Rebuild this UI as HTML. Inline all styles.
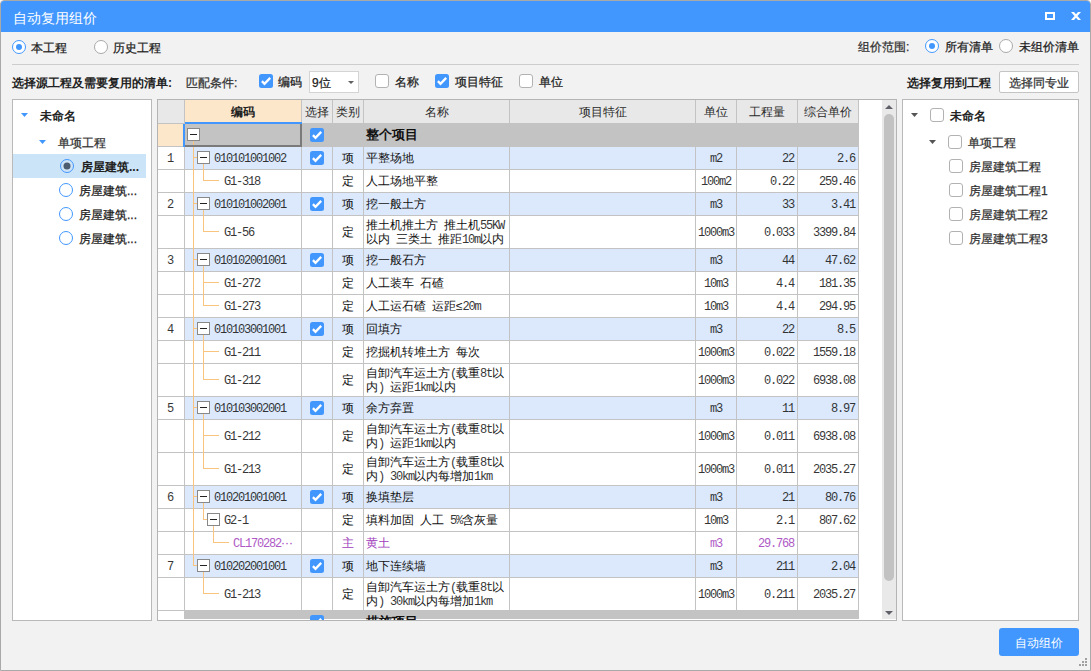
<!DOCTYPE html>
<html><head><meta charset="utf-8"><style>
html,body{margin:0;padding:0;width:1091px;height:671px;overflow:hidden;background:#fff}
body>div,body>svg{position:absolute}
#root{position:absolute;left:0;top:0;width:1091px;height:671px;overflow:hidden}
#root>div,#root>svg{position:absolute}
.t{font-family:'Liberation Sans',sans-serif;white-space:nowrap;-webkit-text-stroke:0.25px currentColor}
.w{-webkit-text-stroke:0}
.tt{font-family:'Liberation Sans',sans-serif;font-size:12px;white-space:nowrap}
.tt .m{font-family:'Liberation Mono',monospace;font-size:12px;letter-spacing:-1.2px;opacity:.85}
</style></head><body><div id="root">
<div style="left:0px;top:0px;width:1091px;height:671px;background:#fff"></div>
<div style="left:0px;top:0px;width:1091px;height:671px;background:#f2f2f2;border:1px solid #a9a9a9;box-sizing:border-box;border-radius:4px 4px 0 0"></div>
<div style="left:1px;top:1px;width:1089px;height:31px;background:#4297fe;border-radius:3px 3px 0 0"></div>
<div class="t" style="left:13px;top:7.5px;font-size:14px;line-height:20px;font-weight:normal;color:#fff;-webkit-text-stroke:0;">自动复用组价</div>
<div style="left:1045px;top:12px;width:10px;height:8px;border:2px solid #fff;box-sizing:border-box"></div>
<svg style="left:1071px;top:12px" width="10" height="8" viewBox="0 0 10 8"><path d="M0 0 H3 L10 8 H7 Z M7 0 H10 L3 8 H0 Z" fill="#fff"/></svg>
<svg style="left:12px;top:40px" width="14" height="14" viewBox="0 0 14 14"><circle cx="7" cy="7" r="6.5" fill="#fff" stroke="#4297fe" stroke-width="1"/><circle cx="7" cy="7" r="3" fill="#4297fe"/></svg>
<div class="t" style="left:31px;top:38.0px;font-size:12px;line-height:20px;font-weight:normal;color:#222;">本工程</div>
<svg style="left:94px;top:40px" width="14" height="14" viewBox="0 0 14 14"><circle cx="7" cy="7" r="6.5" fill="#fff" stroke="#a8a8a8" stroke-width="1"/></svg>
<div class="t" style="left:113px;top:38.0px;font-size:12px;line-height:20px;font-weight:normal;color:#222;">历史工程</div>
<div class="t" style="left:858px;top:37.0px;font-size:12px;line-height:20px;font-weight:normal;color:#333;">组价范围:</div>
<svg style="left:925px;top:39px" width="14" height="14" viewBox="0 0 14 14"><circle cx="7" cy="7" r="6.5" fill="#fff" stroke="#4297fe" stroke-width="1"/><circle cx="7" cy="7" r="3" fill="#4297fe"/></svg>
<div class="t" style="left:945px;top:37.0px;font-size:12px;line-height:20px;font-weight:normal;color:#222;">所有清单</div>
<svg style="left:999px;top:39px" width="14" height="14" viewBox="0 0 14 14"><circle cx="7" cy="7" r="6.5" fill="#fff" stroke="#a8a8a8" stroke-width="1"/></svg>
<div class="t" style="left:1019px;top:37.0px;font-size:12px;line-height:20px;font-weight:normal;color:#222;">未组价清单</div>
<div style="left:12px;top:64px;width:1067px;height:1px;background:#cdcdcd"></div>
<div class="t" style="left:12px;top:73.0px;font-size:12px;line-height:20px;font-weight:bold;color:#222;-webkit-text-stroke:0;">选择源工程及需要复用的清单:</div>
<div class="t" style="left:186px;top:72.5px;font-size:12px;line-height:20px;font-weight:normal;color:#333;">匹配条件:</div>
<svg style="left:259px;top:74px" width="14" height="14" viewBox="0 0 14 14"><rect x="0" y="0" width="14" height="14" rx="2.5" fill="#4297fe"/><path d="M2.9 7.1 L5.5 9.8 L11.2 3.9" stroke="#fff" stroke-width="2.3" fill="none" stroke-linecap="butt"/></svg>
<div class="t" style="left:278px;top:71.5px;font-size:12px;line-height:20px;font-weight:normal;color:#222;">编码</div>
<div style="left:309px;top:71px;width:50px;height:22px;background:#fff;border:1px solid #d4d4d4;box-sizing:border-box"></div>
<div class="t" style="left:312px;top:73.3px;font-size:12px;line-height:20px;font-weight:normal;color:#222;">9位</div>
<svg style="left:348px;top:81px" width="6" height="3" viewBox="0 0 6 3"><path d="M0 0 L6 0 L3.0 3 Z" fill="#606060"/></svg>
<svg style="left:375px;top:74px" width="14" height="14" viewBox="0 0 14 14"><rect x="0.5" y="0.5" width="13" height="13" rx="2.5" fill="#fff" stroke="#b2b2b2" stroke-width="1"/></svg>
<div class="t" style="left:395px;top:71.5px;font-size:12px;line-height:20px;font-weight:normal;color:#222;">名称</div>
<svg style="left:435px;top:74px" width="14" height="14" viewBox="0 0 14 14"><rect x="0" y="0" width="14" height="14" rx="2.5" fill="#4297fe"/><path d="M2.9 7.1 L5.5 9.8 L11.2 3.9" stroke="#fff" stroke-width="2.3" fill="none" stroke-linecap="butt"/></svg>
<div class="t" style="left:455px;top:71.5px;font-size:12px;line-height:20px;font-weight:normal;color:#222;">项目特征</div>
<svg style="left:519px;top:74px" width="14" height="14" viewBox="0 0 14 14"><rect x="0.5" y="0.5" width="13" height="13" rx="2.5" fill="#fff" stroke="#b2b2b2" stroke-width="1"/></svg>
<div class="t" style="left:539px;top:71.5px;font-size:12px;line-height:20px;font-weight:normal;color:#222;">单位</div>
<div class="t" style="left:907px;top:73.0px;font-size:12px;line-height:20px;font-weight:bold;color:#222;-webkit-text-stroke:0;">选择复用到工程</div>
<div style="left:999px;top:71px;width:80px;height:22px;background:#fff;border:1px solid #c4c4c4;box-sizing:border-box;border-radius:2px"></div>
<div class="t" style="left:1009px;top:73.0px;font-size:12px;line-height:20px;font-weight:normal;color:#333;">选择同专业</div>
<div style="left:12px;top:99px;width:140px;height:522px;background:#fff;border:1px solid #b9b9b9;box-sizing:border-box"></div>
<svg style="left:21px;top:113px" width="7" height="4" viewBox="0 0 7 4"><path d="M0 0 L7 0 L3.5 4 Z" fill="#4297fe"/></svg>
<div class="t" style="left:40px;top:106.0px;font-size:12px;line-height:20px;font-weight:bold;color:#222;-webkit-text-stroke:0;">未命名</div>
<svg style="left:39px;top:140px" width="7" height="4" viewBox="0 0 7 4"><path d="M0 0 L7 0 L3.5 4 Z" fill="#4297fe"/></svg>
<div class="t" style="left:58px;top:132.5px;font-size:12px;line-height:20px;font-weight:normal;color:#333;">单项工程</div>
<div style="left:13px;top:154px;width:133px;height:24px;background:#cce4f7"></div>
<svg style="left:60px;top:159px" width="14" height="14" viewBox="0 0 14 14"><circle cx="7" cy="7" r="6.5" fill="#cfe3f7" stroke="#4297fe" stroke-width="1"/><circle cx="7" cy="7" r="3.5" fill="#4b5b70"/></svg>
<div class="t" style="left:81px;top:157.0px;font-size:12px;line-height:20px;font-weight:bold;color:#222;-webkit-text-stroke:0;">房屋建筑...</div>
<svg style="left:59px;top:183px" width="14" height="14" viewBox="0 0 14 14"><circle cx="7" cy="7" r="6.5" fill="#fff" stroke="#4297fe" stroke-width="1"/></svg>
<div class="t" style="left:79px;top:180.5px;font-size:12px;line-height:20px;font-weight:normal;color:#222;">房屋建筑...</div>
<svg style="left:59px;top:207px" width="14" height="14" viewBox="0 0 14 14"><circle cx="7" cy="7" r="6.5" fill="#fff" stroke="#4297fe" stroke-width="1"/></svg>
<div class="t" style="left:79px;top:204.5px;font-size:12px;line-height:20px;font-weight:normal;color:#222;">房屋建筑...</div>
<svg style="left:59px;top:231px" width="14" height="14" viewBox="0 0 14 14"><circle cx="7" cy="7" r="6.5" fill="#fff" stroke="#4297fe" stroke-width="1"/></svg>
<div class="t" style="left:79px;top:228.5px;font-size:12px;line-height:20px;font-weight:normal;color:#222;">房屋建筑...</div>
<div style="left:902px;top:99px;width:177px;height:522px;background:#fff;border:1px solid #b9b9b9;box-sizing:border-box"></div>
<svg style="left:911px;top:113px" width="7" height="4" viewBox="0 0 7 4"><path d="M0 0 L7 0 L3.5 4 Z" fill="#555"/></svg>
<svg style="left:930px;top:108px" width="14" height="14" viewBox="0 0 14 14"><rect x="0.5" y="0.5" width="13" height="13" rx="2.5" fill="#fff" stroke="#b2b2b2" stroke-width="1"/></svg>
<div class="t" style="left:950px;top:106.0px;font-size:12px;line-height:20px;font-weight:bold;color:#222;-webkit-text-stroke:0;">未命名</div>
<svg style="left:929px;top:140px" width="7" height="4" viewBox="0 0 7 4"><path d="M0 0 L7 0 L3.5 4 Z" fill="#555"/></svg>
<svg style="left:948px;top:135px" width="14" height="14" viewBox="0 0 14 14"><rect x="0.5" y="0.5" width="13" height="13" rx="2.5" fill="#fff" stroke="#b2b2b2" stroke-width="1"/></svg>
<div class="t" style="left:968px;top:132.5px;font-size:12px;line-height:20px;font-weight:normal;color:#333;">单项工程</div>
<svg style="left:949px;top:159px" width="14" height="14" viewBox="0 0 14 14"><rect x="0.5" y="0.5" width="13" height="13" rx="2.5" fill="#fff" stroke="#b2b2b2" stroke-width="1"/></svg>
<div class="t" style="left:969px;top:156.5px;font-size:12px;line-height:20px;font-weight:normal;color:#333;">房屋建筑工程</div>
<svg style="left:949px;top:183px" width="14" height="14" viewBox="0 0 14 14"><rect x="0.5" y="0.5" width="13" height="13" rx="2.5" fill="#fff" stroke="#b2b2b2" stroke-width="1"/></svg>
<div class="t" style="left:969px;top:180.5px;font-size:12px;line-height:20px;font-weight:normal;color:#333;">房屋建筑工程1</div>
<svg style="left:949px;top:207px" width="14" height="14" viewBox="0 0 14 14"><rect x="0.5" y="0.5" width="13" height="13" rx="2.5" fill="#fff" stroke="#b2b2b2" stroke-width="1"/></svg>
<div class="t" style="left:969px;top:204.5px;font-size:12px;line-height:20px;font-weight:normal;color:#333;">房屋建筑工程2</div>
<svg style="left:949px;top:231px" width="14" height="14" viewBox="0 0 14 14"><rect x="0.5" y="0.5" width="13" height="13" rx="2.5" fill="#fff" stroke="#b2b2b2" stroke-width="1"/></svg>
<div class="t" style="left:969px;top:228.5px;font-size:12px;line-height:20px;font-weight:normal;color:#333;">房屋建筑工程3</div>
<div style="left:999px;top:628px;width:80px;height:28px;background:#4297fe;border-radius:3px"></div>
<div class="t" style="left:1015px;top:633.0px;font-size:12px;line-height:20px;font-weight:normal;color:#fff;-webkit-text-stroke:0;">自动组价</div>
<div style="left:1085px;top:658px;width:2px;height:2px;background:#a0a0a0"></div>
<div style="left:1082px;top:661px;width:2px;height:2px;background:#a0a0a0"></div>
<div style="left:1085px;top:661px;width:2px;height:2px;background:#a0a0a0"></div>
<div style="left:1079px;top:664px;width:2px;height:2px;background:#a0a0a0"></div>
<div style="left:1082px;top:664px;width:2px;height:2px;background:#a0a0a0"></div>
<div style="left:1085px;top:664px;width:2px;height:2px;background:#a0a0a0"></div>
<div style="left:157px;top:99px;width:740px;height:522px;background:#fff"></div>
<div style="left:158px;top:100px;width:700px;height:23px;background:#e8e8e8"></div>
<div style="left:185px;top:100px;width:116px;height:22px;background:#fde7ca"></div>
<div style="left:185px;top:124px;width:673px;height:22px;background:#c3c3c3"></div>
<div style="left:185px;top:147px;width:673px;height:22px;background:#dce9fc"></div>
<div style="left:185px;top:193px;width:673px;height:22px;background:#dce9fc"></div>
<div style="left:185px;top:249px;width:673px;height:22px;background:#dce9fc"></div>
<div style="left:185px;top:318px;width:673px;height:22px;background:#dce9fc"></div>
<div style="left:185px;top:397px;width:673px;height:22px;background:#dce9fc"></div>
<div style="left:185px;top:486px;width:673px;height:22px;background:#dce9fc"></div>
<div style="left:185px;top:555px;width:673px;height:22px;background:#dce9fc"></div>
<div style="left:184px;top:611px;width:674px;height:8px;background:#c3c3c3"></div>
<div style="left:158px;top:124px;width:26px;height:22px;background:#fde7ca"></div>
<div style="left:158px;top:123px;width:700px;height:1px;background:#c3c3c3"></div>
<div style="left:158px;top:146px;width:700px;height:1px;background:#c3c3c3"></div>
<div style="left:158px;top:169px;width:700px;height:1px;background:#c3c3c3"></div>
<div style="left:158px;top:192px;width:700px;height:1px;background:#c3c3c3"></div>
<div style="left:158px;top:215px;width:700px;height:1px;background:#c3c3c3"></div>
<div style="left:158px;top:248px;width:700px;height:1px;background:#c3c3c3"></div>
<div style="left:158px;top:271px;width:700px;height:1px;background:#c3c3c3"></div>
<div style="left:158px;top:294px;width:700px;height:1px;background:#c3c3c3"></div>
<div style="left:158px;top:317px;width:700px;height:1px;background:#c3c3c3"></div>
<div style="left:158px;top:340px;width:700px;height:1px;background:#c3c3c3"></div>
<div style="left:158px;top:363px;width:700px;height:1px;background:#c3c3c3"></div>
<div style="left:158px;top:396px;width:700px;height:1px;background:#c3c3c3"></div>
<div style="left:158px;top:419px;width:700px;height:1px;background:#c3c3c3"></div>
<div style="left:158px;top:452px;width:700px;height:1px;background:#c3c3c3"></div>
<div style="left:158px;top:485px;width:700px;height:1px;background:#c3c3c3"></div>
<div style="left:158px;top:508px;width:700px;height:1px;background:#c3c3c3"></div>
<div style="left:158px;top:531px;width:700px;height:1px;background:#c3c3c3"></div>
<div style="left:158px;top:554px;width:700px;height:1px;background:#c3c3c3"></div>
<div style="left:158px;top:577px;width:700px;height:1px;background:#c3c3c3"></div>
<div style="left:158px;top:610px;width:700px;height:1px;background:#c3c3c3"></div>
<div style="left:184px;top:100px;width:1px;height:511px;background:#c3c3c3"></div>
<div style="left:301px;top:100px;width:1px;height:519px;background:#c3c3c3"></div>
<div style="left:332px;top:100px;width:1px;height:519px;background:#c3c3c3"></div>
<div style="left:363px;top:100px;width:1px;height:519px;background:#c3c3c3"></div>
<div style="left:509px;top:100px;width:1px;height:519px;background:#c3c3c3"></div>
<div style="left:695px;top:100px;width:1px;height:519px;background:#c3c3c3"></div>
<div style="left:736px;top:100px;width:1px;height:519px;background:#c3c3c3"></div>
<div style="left:797px;top:100px;width:1px;height:519px;background:#c3c3c3"></div>
<div style="left:858px;top:100px;width:1px;height:519px;background:#c3c3c3"></div>
<div style="left:193px;top:141px;width:1px;height:425px;background:#f9c47f"></div>
<div style="left:193px;top:157px;width:4px;height:1px;background:#f9c47f"></div>
<div style="left:193px;top:203px;width:4px;height:1px;background:#f9c47f"></div>
<div style="left:193px;top:259px;width:4px;height:1px;background:#f9c47f"></div>
<div style="left:193px;top:328px;width:4px;height:1px;background:#f9c47f"></div>
<div style="left:193px;top:407px;width:4px;height:1px;background:#f9c47f"></div>
<div style="left:193px;top:496px;width:4px;height:1px;background:#f9c47f"></div>
<div style="left:193px;top:565px;width:4px;height:1px;background:#f9c47f"></div>
<div style="left:203px;top:164px;width:1px;height:17px;background:#f9c47f"></div>
<div style="left:203px;top:180px;width:16px;height:1px;background:#f9c47f"></div>
<div style="left:203px;top:210px;width:1px;height:22px;background:#f9c47f"></div>
<div style="left:203px;top:231px;width:16px;height:1px;background:#f9c47f"></div>
<div style="left:203px;top:266px;width:1px;height:40px;background:#f9c47f"></div>
<div style="left:203px;top:282px;width:16px;height:1px;background:#f9c47f"></div>
<div style="left:203px;top:305px;width:16px;height:1px;background:#f9c47f"></div>
<div style="left:203px;top:335px;width:1px;height:45px;background:#f9c47f"></div>
<div style="left:203px;top:351px;width:16px;height:1px;background:#f9c47f"></div>
<div style="left:203px;top:379px;width:16px;height:1px;background:#f9c47f"></div>
<div style="left:203px;top:414px;width:1px;height:55px;background:#f9c47f"></div>
<div style="left:203px;top:435px;width:16px;height:1px;background:#f9c47f"></div>
<div style="left:203px;top:468px;width:16px;height:1px;background:#f9c47f"></div>
<div style="left:203px;top:503px;width:1px;height:17px;background:#f9c47f"></div>
<div style="left:203px;top:519px;width:4px;height:1px;background:#f9c47f"></div>
<div style="left:203px;top:572px;width:1px;height:22px;background:#f9c47f"></div>
<div style="left:203px;top:593px;width:16px;height:1px;background:#f9c47f"></div>
<div style="left:213px;top:526px;width:1px;height:17px;background:#f9c47f"></div>
<div style="left:213px;top:542px;width:16px;height:1px;background:#f9c47f"></div>
<svg style="left:187px;top:128px" width="13" height="13" viewBox="0 0 13 13"><rect x="0.5" y="0.5" width="12" height="12" fill="#fff" stroke="#888"/><path d="M3 6.5 H10" stroke="#222" stroke-width="1"/></svg>
<svg style="left:310px;top:128px" width="14" height="14" viewBox="0 0 14 14"><rect x="0" y="0" width="14" height="14" rx="2.5" fill="#4297fe"/><path d="M2.9 7.1 L5.5 9.8 L11.2 3.9" stroke="#fff" stroke-width="2.3" fill="none" stroke-linecap="butt"/></svg>
<div class="t" style="left:366px;top:125.0px;font-size:13px;line-height:20px;font-weight:bold;color:#111;-webkit-text-stroke:0;">整个项目</div>
<div class="tt" style="left:157px;top:149.5px;line-height:16px;color:#111;font-weight:normal;text-align:center;width:26px;"><span class="m">1</span></div>
<svg style="left:197px;top:151px" width="13" height="13" viewBox="0 0 13 13"><rect x="0.5" y="0.5" width="12" height="12" fill="#fff" stroke="#888"/><path d="M3 6.5 H10" stroke="#222" stroke-width="1"/></svg>
<div class="tt" style="left:214px;top:149.5px;line-height:16px;color:#111;font-weight:normal;"><span class="m">010101001002</span></div>
<svg style="left:310px;top:151px" width="14" height="14" viewBox="0 0 14 14"><rect x="0" y="0" width="14" height="14" rx="2.5" fill="#4297fe"/><path d="M2.9 7.1 L5.5 9.8 L11.2 3.9" stroke="#fff" stroke-width="2.3" fill="none" stroke-linecap="butt"/></svg>
<div class="tt" style="left:333px;top:149.5px;line-height:16px;color:#111;font-weight:normal;text-align:center;width:30px;"><span class="c">项</span></div>
<div class="tt" style="left:366px;top:149.5px;line-height:16px;color:#111;font-weight:normal;"><span class="c">平整场地</span></div>
<div class="tt" style="left:696px;top:149.5px;line-height:16px;color:#111;font-weight:normal;text-align:center;width:40px;"><span class="m">m2</span></div>
<div class="tt" style="left:736px;top:149.5px;line-height:16px;color:#111;font-weight:normal;text-align:right;width:58px;"><span class="m">22</span></div>
<div class="tt" style="left:797px;top:149.5px;line-height:16px;color:#111;font-weight:normal;text-align:right;width:58px;"><span class="m">2.6</span></div>
<div class="tt" style="left:224px;top:172.5px;line-height:16px;color:#111;font-weight:normal;"><span class="m">G1-318</span></div>
<div class="tt" style="left:333px;top:172.5px;line-height:16px;color:#111;font-weight:normal;text-align:center;width:30px;"><span class="c">定</span></div>
<div class="tt" style="left:366px;top:172.5px;line-height:16px;color:#111;font-weight:normal;"><span class="c">人工场地平整</span></div>
<div class="tt" style="left:696px;top:172.5px;line-height:16px;color:#111;font-weight:normal;text-align:center;width:40px;"><span class="m">100m2</span></div>
<div class="tt" style="left:736px;top:172.5px;line-height:16px;color:#111;font-weight:normal;text-align:right;width:58px;"><span class="m">0.22</span></div>
<div class="tt" style="left:797px;top:172.5px;line-height:16px;color:#111;font-weight:normal;text-align:right;width:58px;"><span class="m">259.46</span></div>
<div class="tt" style="left:157px;top:195.5px;line-height:16px;color:#111;font-weight:normal;text-align:center;width:26px;"><span class="m">2</span></div>
<svg style="left:197px;top:197px" width="13" height="13" viewBox="0 0 13 13"><rect x="0.5" y="0.5" width="12" height="12" fill="#fff" stroke="#888"/><path d="M3 6.5 H10" stroke="#222" stroke-width="1"/></svg>
<div class="tt" style="left:214px;top:195.5px;line-height:16px;color:#111;font-weight:normal;"><span class="m">010101002001</span></div>
<svg style="left:310px;top:197px" width="14" height="14" viewBox="0 0 14 14"><rect x="0" y="0" width="14" height="14" rx="2.5" fill="#4297fe"/><path d="M2.9 7.1 L5.5 9.8 L11.2 3.9" stroke="#fff" stroke-width="2.3" fill="none" stroke-linecap="butt"/></svg>
<div class="tt" style="left:333px;top:195.5px;line-height:16px;color:#111;font-weight:normal;text-align:center;width:30px;"><span class="c">项</span></div>
<div class="tt" style="left:366px;top:195.5px;line-height:16px;color:#111;font-weight:normal;"><span class="c">挖一般土方</span></div>
<div class="tt" style="left:696px;top:195.5px;line-height:16px;color:#111;font-weight:normal;text-align:center;width:40px;"><span class="m">m3</span></div>
<div class="tt" style="left:736px;top:195.5px;line-height:16px;color:#111;font-weight:normal;text-align:right;width:58px;"><span class="m">33</span></div>
<div class="tt" style="left:797px;top:195.5px;line-height:16px;color:#111;font-weight:normal;text-align:right;width:58px;"><span class="m">3.41</span></div>
<div class="tt" style="left:224px;top:223.5px;line-height:16px;color:#111;font-weight:normal;"><span class="m">G1-56</span></div>
<div class="tt" style="left:333px;top:223.5px;line-height:16px;color:#111;font-weight:normal;text-align:center;width:30px;"><span class="c">定</span></div>
<div class="tt" style="left:366px;top:216.5px;line-height:16px;color:#111;font-weight:normal;"><span class="c">推土机推土方</span><span class="m">&nbsp;</span><span class="c">推土机</span><span class="m">55KW</span></div>
<div class="tt" style="left:366px;top:230.5px;line-height:16px;color:#111;font-weight:normal;"><span class="c">以内</span><span class="m">&nbsp;</span><span class="c">三类土</span><span class="m">&nbsp;</span><span class="c">推距</span><span class="m">10m</span><span class="c">以内</span></div>
<div class="tt" style="left:696px;top:223.5px;line-height:16px;color:#111;font-weight:normal;text-align:center;width:40px;"><span class="m">1000m3</span></div>
<div class="tt" style="left:736px;top:223.5px;line-height:16px;color:#111;font-weight:normal;text-align:right;width:58px;"><span class="m">0.033</span></div>
<div class="tt" style="left:797px;top:223.5px;line-height:16px;color:#111;font-weight:normal;text-align:right;width:58px;"><span class="m">3399.84</span></div>
<div class="tt" style="left:157px;top:251.5px;line-height:16px;color:#111;font-weight:normal;text-align:center;width:26px;"><span class="m">3</span></div>
<svg style="left:197px;top:253px" width="13" height="13" viewBox="0 0 13 13"><rect x="0.5" y="0.5" width="12" height="12" fill="#fff" stroke="#888"/><path d="M3 6.5 H10" stroke="#222" stroke-width="1"/></svg>
<div class="tt" style="left:214px;top:251.5px;line-height:16px;color:#111;font-weight:normal;"><span class="m">010102001001</span></div>
<svg style="left:310px;top:253px" width="14" height="14" viewBox="0 0 14 14"><rect x="0" y="0" width="14" height="14" rx="2.5" fill="#4297fe"/><path d="M2.9 7.1 L5.5 9.8 L11.2 3.9" stroke="#fff" stroke-width="2.3" fill="none" stroke-linecap="butt"/></svg>
<div class="tt" style="left:333px;top:251.5px;line-height:16px;color:#111;font-weight:normal;text-align:center;width:30px;"><span class="c">项</span></div>
<div class="tt" style="left:366px;top:251.5px;line-height:16px;color:#111;font-weight:normal;"><span class="c">挖一般石方</span></div>
<div class="tt" style="left:696px;top:251.5px;line-height:16px;color:#111;font-weight:normal;text-align:center;width:40px;"><span class="m">m3</span></div>
<div class="tt" style="left:736px;top:251.5px;line-height:16px;color:#111;font-weight:normal;text-align:right;width:58px;"><span class="m">44</span></div>
<div class="tt" style="left:797px;top:251.5px;line-height:16px;color:#111;font-weight:normal;text-align:right;width:58px;"><span class="m">47.62</span></div>
<div class="tt" style="left:224px;top:274.5px;line-height:16px;color:#111;font-weight:normal;"><span class="m">G1-272</span></div>
<div class="tt" style="left:333px;top:274.5px;line-height:16px;color:#111;font-weight:normal;text-align:center;width:30px;"><span class="c">定</span></div>
<div class="tt" style="left:366px;top:274.5px;line-height:16px;color:#111;font-weight:normal;"><span class="c">人工装车</span><span class="m">&nbsp;</span><span class="c">石碴</span></div>
<div class="tt" style="left:696px;top:274.5px;line-height:16px;color:#111;font-weight:normal;text-align:center;width:40px;"><span class="m">10m3</span></div>
<div class="tt" style="left:736px;top:274.5px;line-height:16px;color:#111;font-weight:normal;text-align:right;width:58px;"><span class="m">4.4</span></div>
<div class="tt" style="left:797px;top:274.5px;line-height:16px;color:#111;font-weight:normal;text-align:right;width:58px;"><span class="m">181.35</span></div>
<div class="tt" style="left:224px;top:297.5px;line-height:16px;color:#111;font-weight:normal;"><span class="m">G1-273</span></div>
<div class="tt" style="left:333px;top:297.5px;line-height:16px;color:#111;font-weight:normal;text-align:center;width:30px;"><span class="c">定</span></div>
<div class="tt" style="left:366px;top:297.5px;line-height:16px;color:#111;font-weight:normal;"><span class="c">人工运石碴</span><span class="m">&nbsp;</span><span class="c">运距≤</span><span class="m">20m</span></div>
<div class="tt" style="left:696px;top:297.5px;line-height:16px;color:#111;font-weight:normal;text-align:center;width:40px;"><span class="m">10m3</span></div>
<div class="tt" style="left:736px;top:297.5px;line-height:16px;color:#111;font-weight:normal;text-align:right;width:58px;"><span class="m">4.4</span></div>
<div class="tt" style="left:797px;top:297.5px;line-height:16px;color:#111;font-weight:normal;text-align:right;width:58px;"><span class="m">294.95</span></div>
<div class="tt" style="left:157px;top:320.5px;line-height:16px;color:#111;font-weight:normal;text-align:center;width:26px;"><span class="m">4</span></div>
<svg style="left:197px;top:322px" width="13" height="13" viewBox="0 0 13 13"><rect x="0.5" y="0.5" width="12" height="12" fill="#fff" stroke="#888"/><path d="M3 6.5 H10" stroke="#222" stroke-width="1"/></svg>
<div class="tt" style="left:214px;top:320.5px;line-height:16px;color:#111;font-weight:normal;"><span class="m">010103001001</span></div>
<svg style="left:310px;top:322px" width="14" height="14" viewBox="0 0 14 14"><rect x="0" y="0" width="14" height="14" rx="2.5" fill="#4297fe"/><path d="M2.9 7.1 L5.5 9.8 L11.2 3.9" stroke="#fff" stroke-width="2.3" fill="none" stroke-linecap="butt"/></svg>
<div class="tt" style="left:333px;top:320.5px;line-height:16px;color:#111;font-weight:normal;text-align:center;width:30px;"><span class="c">项</span></div>
<div class="tt" style="left:366px;top:320.5px;line-height:16px;color:#111;font-weight:normal;"><span class="c">回填方</span></div>
<div class="tt" style="left:696px;top:320.5px;line-height:16px;color:#111;font-weight:normal;text-align:center;width:40px;"><span class="m">m3</span></div>
<div class="tt" style="left:736px;top:320.5px;line-height:16px;color:#111;font-weight:normal;text-align:right;width:58px;"><span class="m">22</span></div>
<div class="tt" style="left:797px;top:320.5px;line-height:16px;color:#111;font-weight:normal;text-align:right;width:58px;"><span class="m">8.5</span></div>
<div class="tt" style="left:224px;top:343.5px;line-height:16px;color:#111;font-weight:normal;"><span class="m">G1-211</span></div>
<div class="tt" style="left:333px;top:343.5px;line-height:16px;color:#111;font-weight:normal;text-align:center;width:30px;"><span class="c">定</span></div>
<div class="tt" style="left:366px;top:343.5px;line-height:16px;color:#111;font-weight:normal;"><span class="c">挖掘机转堆土方</span><span class="m">&nbsp;</span><span class="c">每次</span></div>
<div class="tt" style="left:696px;top:343.5px;line-height:16px;color:#111;font-weight:normal;text-align:center;width:40px;"><span class="m">1000m3</span></div>
<div class="tt" style="left:736px;top:343.5px;line-height:16px;color:#111;font-weight:normal;text-align:right;width:58px;"><span class="m">0.022</span></div>
<div class="tt" style="left:797px;top:343.5px;line-height:16px;color:#111;font-weight:normal;text-align:right;width:58px;"><span class="m">1559.18</span></div>
<div class="tt" style="left:224px;top:371.5px;line-height:16px;color:#111;font-weight:normal;"><span class="m">G1-212</span></div>
<div class="tt" style="left:333px;top:371.5px;line-height:16px;color:#111;font-weight:normal;text-align:center;width:30px;"><span class="c">定</span></div>
<div class="tt" style="left:366px;top:364.5px;line-height:16px;color:#111;font-weight:normal;"><span class="c">自卸汽车运土方</span><span class="m">(</span><span class="c">载重</span><span class="m">8t</span><span class="c">以</span></div>
<div class="tt" style="left:366px;top:378.5px;line-height:16px;color:#111;font-weight:normal;"><span class="c">内</span><span class="m">)&nbsp;</span><span class="c">运距</span><span class="m">1km</span><span class="c">以内</span></div>
<div class="tt" style="left:696px;top:371.5px;line-height:16px;color:#111;font-weight:normal;text-align:center;width:40px;"><span class="m">1000m3</span></div>
<div class="tt" style="left:736px;top:371.5px;line-height:16px;color:#111;font-weight:normal;text-align:right;width:58px;"><span class="m">0.022</span></div>
<div class="tt" style="left:797px;top:371.5px;line-height:16px;color:#111;font-weight:normal;text-align:right;width:58px;"><span class="m">6938.08</span></div>
<div class="tt" style="left:157px;top:399.5px;line-height:16px;color:#111;font-weight:normal;text-align:center;width:26px;"><span class="m">5</span></div>
<svg style="left:197px;top:401px" width="13" height="13" viewBox="0 0 13 13"><rect x="0.5" y="0.5" width="12" height="12" fill="#fff" stroke="#888"/><path d="M3 6.5 H10" stroke="#222" stroke-width="1"/></svg>
<div class="tt" style="left:214px;top:399.5px;line-height:16px;color:#111;font-weight:normal;"><span class="m">010103002001</span></div>
<svg style="left:310px;top:401px" width="14" height="14" viewBox="0 0 14 14"><rect x="0" y="0" width="14" height="14" rx="2.5" fill="#4297fe"/><path d="M2.9 7.1 L5.5 9.8 L11.2 3.9" stroke="#fff" stroke-width="2.3" fill="none" stroke-linecap="butt"/></svg>
<div class="tt" style="left:333px;top:399.5px;line-height:16px;color:#111;font-weight:normal;text-align:center;width:30px;"><span class="c">项</span></div>
<div class="tt" style="left:366px;top:399.5px;line-height:16px;color:#111;font-weight:normal;"><span class="c">余方弃置</span></div>
<div class="tt" style="left:696px;top:399.5px;line-height:16px;color:#111;font-weight:normal;text-align:center;width:40px;"><span class="m">m3</span></div>
<div class="tt" style="left:736px;top:399.5px;line-height:16px;color:#111;font-weight:normal;text-align:right;width:58px;"><span class="m">11</span></div>
<div class="tt" style="left:797px;top:399.5px;line-height:16px;color:#111;font-weight:normal;text-align:right;width:58px;"><span class="m">8.97</span></div>
<div class="tt" style="left:224px;top:427.5px;line-height:16px;color:#111;font-weight:normal;"><span class="m">G1-212</span></div>
<div class="tt" style="left:333px;top:427.5px;line-height:16px;color:#111;font-weight:normal;text-align:center;width:30px;"><span class="c">定</span></div>
<div class="tt" style="left:366px;top:420.5px;line-height:16px;color:#111;font-weight:normal;"><span class="c">自卸汽车运土方</span><span class="m">(</span><span class="c">载重</span><span class="m">8t</span><span class="c">以</span></div>
<div class="tt" style="left:366px;top:434.5px;line-height:16px;color:#111;font-weight:normal;"><span class="c">内</span><span class="m">)&nbsp;</span><span class="c">运距</span><span class="m">1km</span><span class="c">以内</span></div>
<div class="tt" style="left:696px;top:427.5px;line-height:16px;color:#111;font-weight:normal;text-align:center;width:40px;"><span class="m">1000m3</span></div>
<div class="tt" style="left:736px;top:427.5px;line-height:16px;color:#111;font-weight:normal;text-align:right;width:58px;"><span class="m">0.011</span></div>
<div class="tt" style="left:797px;top:427.5px;line-height:16px;color:#111;font-weight:normal;text-align:right;width:58px;"><span class="m">6938.08</span></div>
<div class="tt" style="left:224px;top:460.5px;line-height:16px;color:#111;font-weight:normal;"><span class="m">G1-213</span></div>
<div class="tt" style="left:333px;top:460.5px;line-height:16px;color:#111;font-weight:normal;text-align:center;width:30px;"><span class="c">定</span></div>
<div class="tt" style="left:366px;top:453.5px;line-height:16px;color:#111;font-weight:normal;"><span class="c">自卸汽车运土方</span><span class="m">(</span><span class="c">载重</span><span class="m">8t</span><span class="c">以</span></div>
<div class="tt" style="left:366px;top:467.5px;line-height:16px;color:#111;font-weight:normal;"><span class="c">内</span><span class="m">)&nbsp;30km</span><span class="c">以内每增加</span><span class="m">1km</span></div>
<div class="tt" style="left:696px;top:460.5px;line-height:16px;color:#111;font-weight:normal;text-align:center;width:40px;"><span class="m">1000m3</span></div>
<div class="tt" style="left:736px;top:460.5px;line-height:16px;color:#111;font-weight:normal;text-align:right;width:58px;"><span class="m">0.011</span></div>
<div class="tt" style="left:797px;top:460.5px;line-height:16px;color:#111;font-weight:normal;text-align:right;width:58px;"><span class="m">2035.27</span></div>
<div class="tt" style="left:157px;top:488.5px;line-height:16px;color:#111;font-weight:normal;text-align:center;width:26px;"><span class="m">6</span></div>
<svg style="left:197px;top:490px" width="13" height="13" viewBox="0 0 13 13"><rect x="0.5" y="0.5" width="12" height="12" fill="#fff" stroke="#888"/><path d="M3 6.5 H10" stroke="#222" stroke-width="1"/></svg>
<div class="tt" style="left:214px;top:488.5px;line-height:16px;color:#111;font-weight:normal;"><span class="m">010201001001</span></div>
<svg style="left:310px;top:490px" width="14" height="14" viewBox="0 0 14 14"><rect x="0" y="0" width="14" height="14" rx="2.5" fill="#4297fe"/><path d="M2.9 7.1 L5.5 9.8 L11.2 3.9" stroke="#fff" stroke-width="2.3" fill="none" stroke-linecap="butt"/></svg>
<div class="tt" style="left:333px;top:488.5px;line-height:16px;color:#111;font-weight:normal;text-align:center;width:30px;"><span class="c">项</span></div>
<div class="tt" style="left:366px;top:488.5px;line-height:16px;color:#111;font-weight:normal;"><span class="c">换填垫层</span></div>
<div class="tt" style="left:696px;top:488.5px;line-height:16px;color:#111;font-weight:normal;text-align:center;width:40px;"><span class="m">m3</span></div>
<div class="tt" style="left:736px;top:488.5px;line-height:16px;color:#111;font-weight:normal;text-align:right;width:58px;"><span class="m">21</span></div>
<div class="tt" style="left:797px;top:488.5px;line-height:16px;color:#111;font-weight:normal;text-align:right;width:58px;"><span class="m">80.76</span></div>
<svg style="left:207px;top:513px" width="13" height="13" viewBox="0 0 13 13"><rect x="0.5" y="0.5" width="12" height="12" fill="#fff" stroke="#888"/><path d="M3 6.5 H10" stroke="#222" stroke-width="1"/></svg>
<div class="tt" style="left:224px;top:511.5px;line-height:16px;color:#111;font-weight:normal;"><span class="m">G2-1</span></div>
<div class="tt" style="left:333px;top:511.5px;line-height:16px;color:#111;font-weight:normal;text-align:center;width:30px;"><span class="c">定</span></div>
<div class="tt" style="left:366px;top:511.5px;line-height:16px;color:#111;font-weight:normal;"><span class="c">填料加固</span><span class="m">&nbsp;</span><span class="c">人工</span><span class="m">&nbsp;5%</span><span class="c">含灰量</span></div>
<div class="tt" style="left:696px;top:511.5px;line-height:16px;color:#111;font-weight:normal;text-align:center;width:40px;"><span class="m">10m3</span></div>
<div class="tt" style="left:736px;top:511.5px;line-height:16px;color:#111;font-weight:normal;text-align:right;width:58px;"><span class="m">2.1</span></div>
<div class="tt" style="left:797px;top:511.5px;line-height:16px;color:#111;font-weight:normal;text-align:right;width:58px;"><span class="m">807.62</span></div>
<div class="tt" style="left:233px;top:534.5px;line-height:16px;color:#a23cbc;font-weight:normal;"><span class="m">CL170282</span><span class="c">···</span></div>
<div class="tt" style="left:333px;top:534.5px;line-height:16px;color:#a23cbc;font-weight:normal;text-align:center;width:30px;"><span class="c">主</span></div>
<div class="tt" style="left:366px;top:534.5px;line-height:16px;color:#a23cbc;font-weight:normal;"><span class="c">黄土</span></div>
<div class="tt" style="left:696px;top:534.5px;line-height:16px;color:#a23cbc;font-weight:normal;text-align:center;width:40px;"><span class="m">m3</span></div>
<div class="tt" style="left:736px;top:534.5px;line-height:16px;color:#a23cbc;font-weight:normal;text-align:right;width:58px;"><span class="m">29.768</span></div>
<div class="tt" style="left:157px;top:557.5px;line-height:16px;color:#111;font-weight:normal;text-align:center;width:26px;"><span class="m">7</span></div>
<svg style="left:197px;top:559px" width="13" height="13" viewBox="0 0 13 13"><rect x="0.5" y="0.5" width="12" height="12" fill="#fff" stroke="#888"/><path d="M3 6.5 H10" stroke="#222" stroke-width="1"/></svg>
<div class="tt" style="left:214px;top:557.5px;line-height:16px;color:#111;font-weight:normal;"><span class="m">010202001001</span></div>
<svg style="left:310px;top:559px" width="14" height="14" viewBox="0 0 14 14"><rect x="0" y="0" width="14" height="14" rx="2.5" fill="#4297fe"/><path d="M2.9 7.1 L5.5 9.8 L11.2 3.9" stroke="#fff" stroke-width="2.3" fill="none" stroke-linecap="butt"/></svg>
<div class="tt" style="left:333px;top:557.5px;line-height:16px;color:#111;font-weight:normal;text-align:center;width:30px;"><span class="c">项</span></div>
<div class="tt" style="left:366px;top:557.5px;line-height:16px;color:#111;font-weight:normal;"><span class="c">地下连续墙</span></div>
<div class="tt" style="left:696px;top:557.5px;line-height:16px;color:#111;font-weight:normal;text-align:center;width:40px;"><span class="m">m3</span></div>
<div class="tt" style="left:736px;top:557.5px;line-height:16px;color:#111;font-weight:normal;text-align:right;width:58px;"><span class="m">211</span></div>
<div class="tt" style="left:797px;top:557.5px;line-height:16px;color:#111;font-weight:normal;text-align:right;width:58px;"><span class="m">2.04</span></div>
<div class="tt" style="left:224px;top:585.5px;line-height:16px;color:#111;font-weight:normal;"><span class="m">G1-213</span></div>
<div class="tt" style="left:333px;top:585.5px;line-height:16px;color:#111;font-weight:normal;text-align:center;width:30px;"><span class="c">定</span></div>
<div class="tt" style="left:366px;top:578.5px;line-height:16px;color:#111;font-weight:normal;"><span class="c">自卸汽车运土方</span><span class="m">(</span><span class="c">载重</span><span class="m">8t</span><span class="c">以</span></div>
<div class="tt" style="left:366px;top:592.5px;line-height:16px;color:#111;font-weight:normal;"><span class="c">内</span><span class="m">)&nbsp;30km</span><span class="c">以内每增加</span><span class="m">1km</span></div>
<div class="tt" style="left:696px;top:585.5px;line-height:16px;color:#111;font-weight:normal;text-align:center;width:40px;"><span class="m">1000m3</span></div>
<div class="tt" style="left:736px;top:585.5px;line-height:16px;color:#111;font-weight:normal;text-align:right;width:58px;"><span class="m">0.211</span></div>
<div class="tt" style="left:797px;top:585.5px;line-height:16px;color:#111;font-weight:normal;text-align:right;width:58px;"><span class="m">2035.27</span></div>
<svg style="left:310px;top:615px" width="14" height="14" viewBox="0 0 14 14"><rect x="0" y="0" width="14" height="14" rx="2.5" fill="#4297fe"/><path d="M2.9 7.1 L5.5 9.8 L11.2 3.9" stroke="#fff" stroke-width="2.3" fill="none" stroke-linecap="butt"/></svg>
<div class="t" style="left:366px;top:612.0px;font-size:13px;line-height:20px;font-weight:bold;color:#111;-webkit-text-stroke:0;">措施项目</div>
<div style="left:185px;top:122px;width:117px;height:2px;background:#4297fe"></div>
<div style="left:183px;top:124px;width:2px;height:23px;background:#4297fe"></div>
<div style="left:300px;top:124px;width:2px;height:23px;background:#7a7a7a"></div>
<div style="left:185px;top:145px;width:117px;height:2px;background:#7a7a7a"></div>
<div class="t" style="left:185px;top:101.5px;font-size:12px;line-height:20px;font-weight:bold;color:#222;text-align:center;width:116px;-webkit-text-stroke:0;">编码</div>
<div class="t" style="left:302px;top:101.5px;font-size:12px;line-height:20px;font-weight:normal;color:#2a2a2a;text-align:center;width:30px;-webkit-text-stroke:0;">选择</div>
<div class="t" style="left:333px;top:101.5px;font-size:12px;line-height:20px;font-weight:normal;color:#2a2a2a;text-align:center;width:30px;-webkit-text-stroke:0;">类别</div>
<div class="t" style="left:364px;top:101.5px;font-size:12px;line-height:20px;font-weight:normal;color:#2a2a2a;text-align:center;width:145px;-webkit-text-stroke:0;">名称</div>
<div class="t" style="left:510px;top:101.5px;font-size:12px;line-height:20px;font-weight:normal;color:#2a2a2a;text-align:center;width:185px;-webkit-text-stroke:0;">项目特征</div>
<div class="t" style="left:696px;top:101.5px;font-size:12px;line-height:20px;font-weight:normal;color:#2a2a2a;text-align:center;width:40px;-webkit-text-stroke:0;">单位</div>
<div class="t" style="left:737px;top:101.5px;font-size:12px;line-height:20px;font-weight:normal;color:#2a2a2a;text-align:center;width:60px;-webkit-text-stroke:0;">工程量</div>
<div class="t" style="left:798px;top:101.5px;font-size:12px;line-height:20px;font-weight:normal;color:#2a2a2a;text-align:center;width:60px;-webkit-text-stroke:0;">综合单价</div>
<div style="left:882px;top:100px;width:14px;height:519px;background:#e9e9e9"></div>
<svg style="left:885px;top:105px" width="8" height="4" viewBox="0 0 8 4"><path d="M0 4 L4.0 0 L8 4 Z" fill="#60606a"/></svg>
<div style="left:884px;top:114px;width:10px;height:467px;background:#c2c2c2;border-radius:5px"></div>
<svg style="left:885px;top:611px" width="8" height="4" viewBox="0 0 8 4"><path d="M0 0 L8 0 L4.0 4 Z" fill="#60606a"/></svg>
<div style="left:157px;top:620px;width:741px;height:40px;background:#f2f2f2"></div>
<div style="left:157px;top:99px;width:740px;height:522px;border:1px solid #b4b4b4;box-sizing:border-box"></div>
</div></body></html>
